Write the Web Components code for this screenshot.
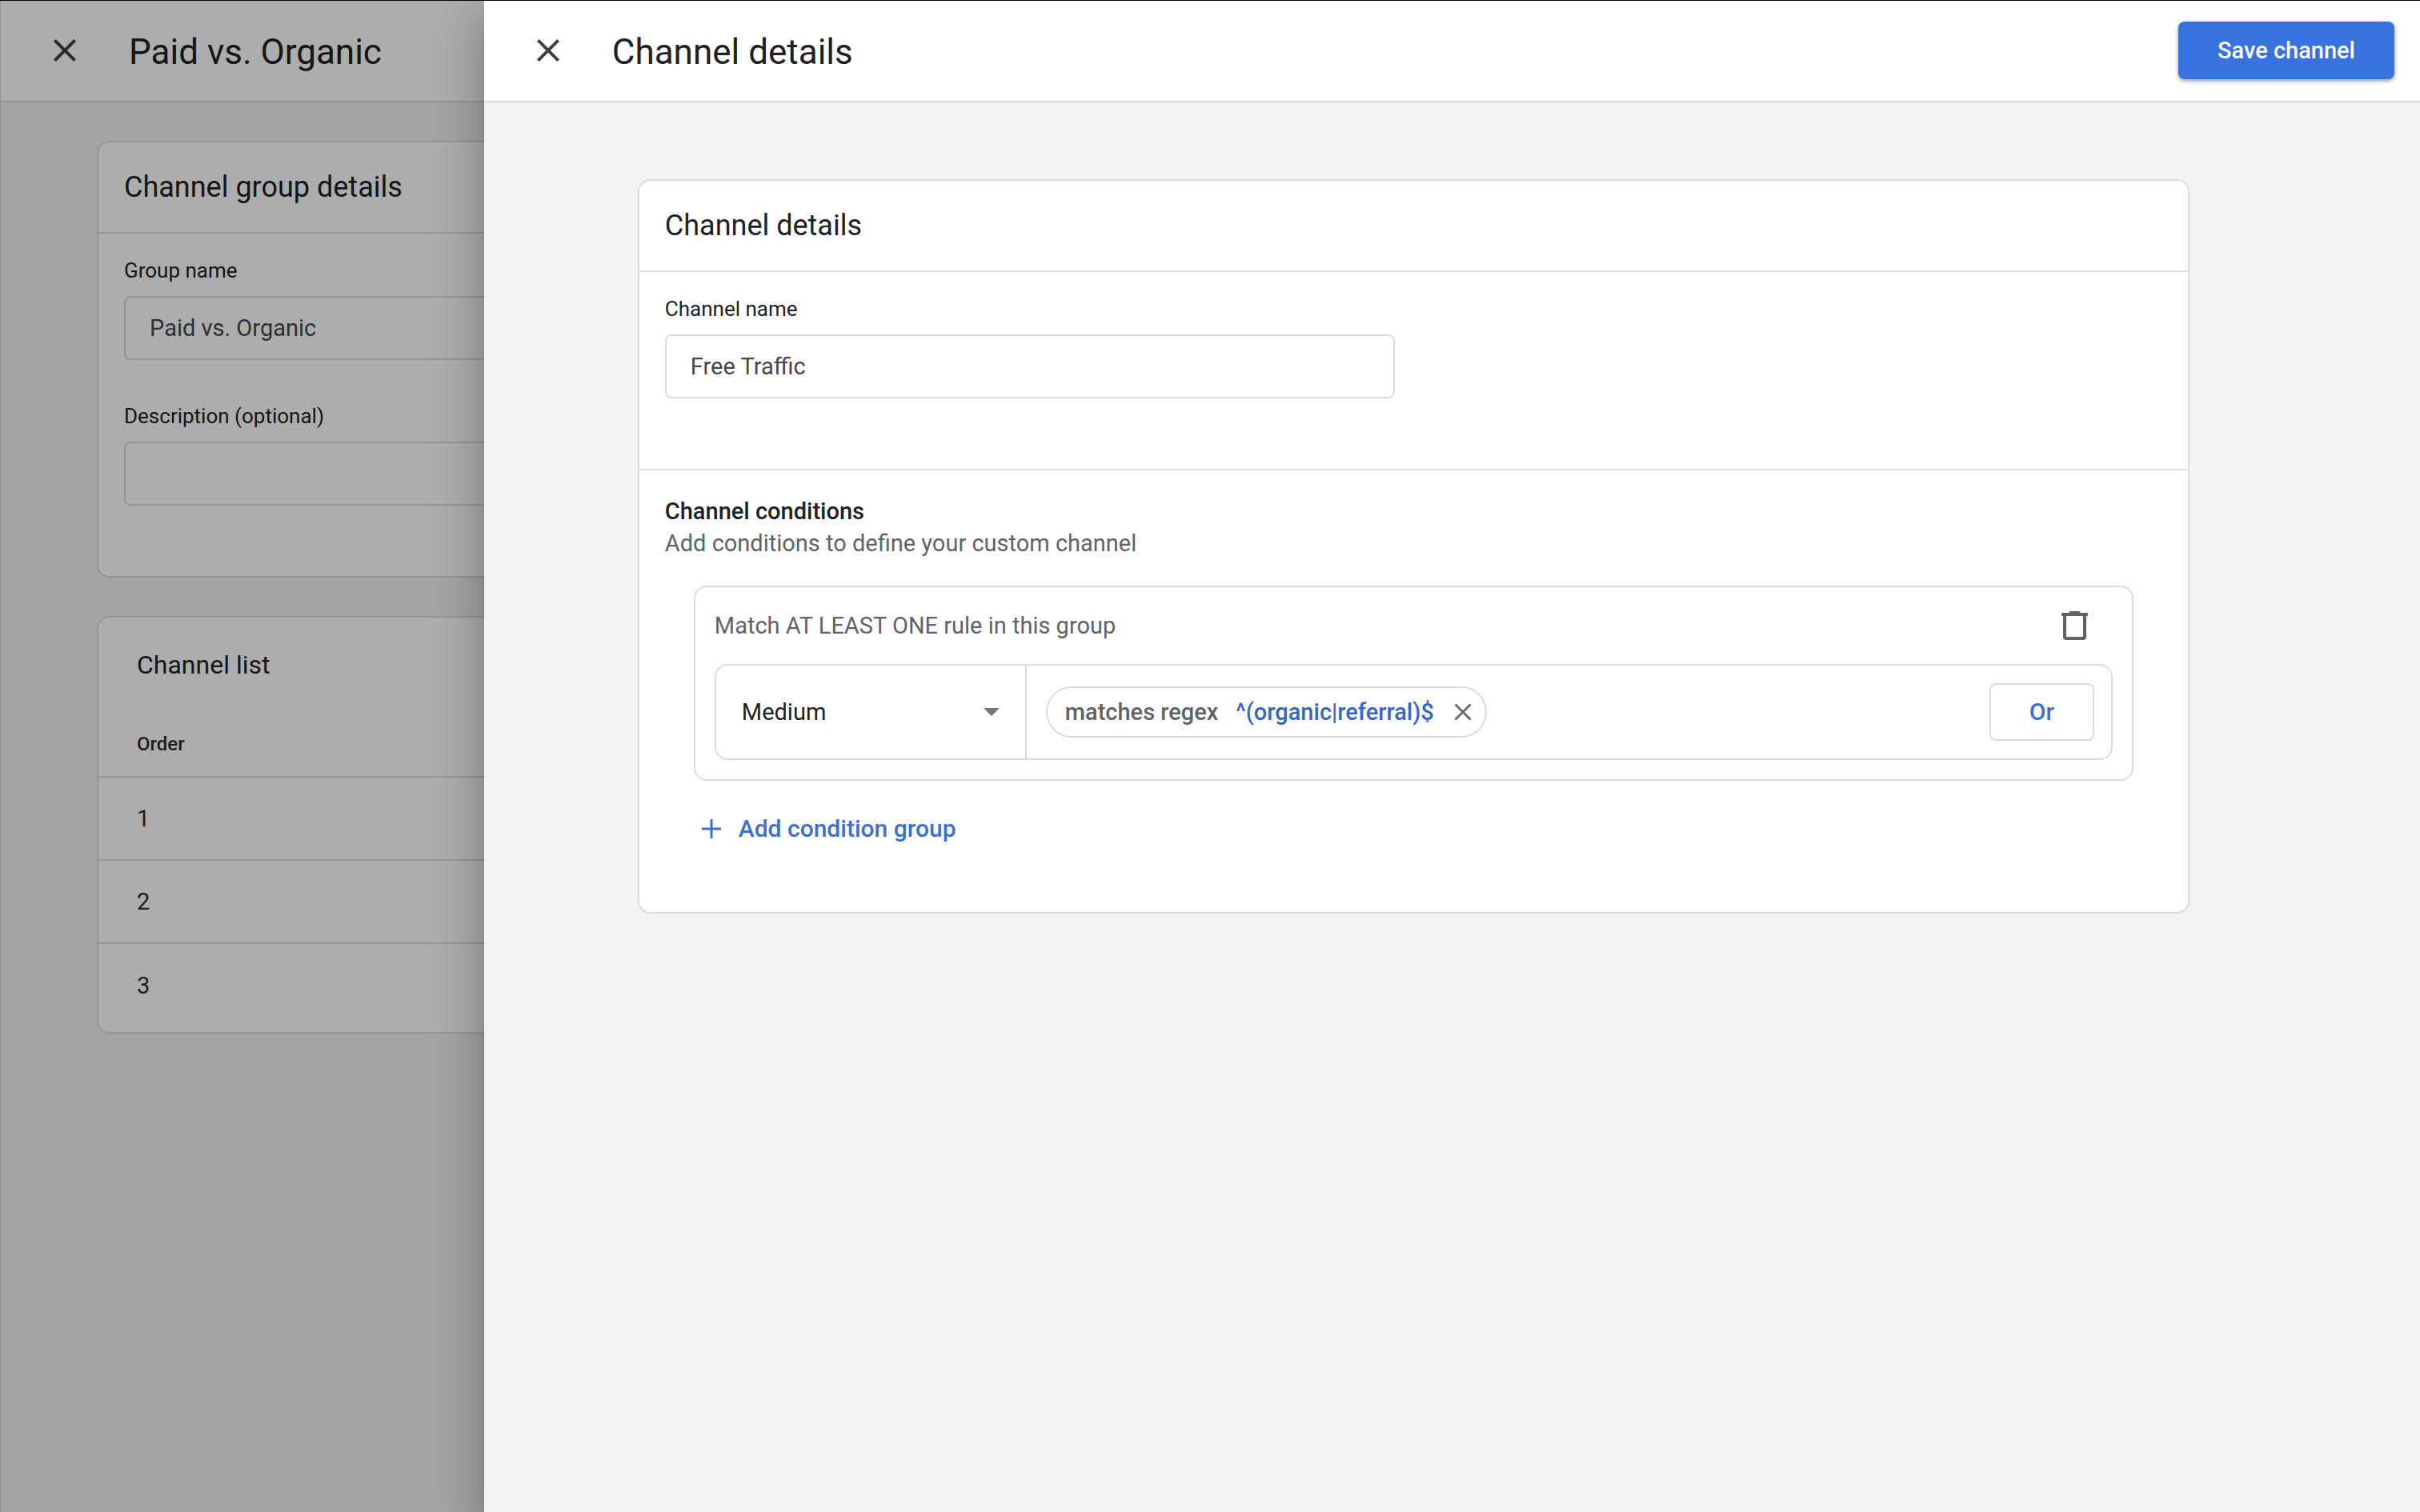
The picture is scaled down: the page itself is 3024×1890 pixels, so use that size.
<!DOCTYPE html>
<html lang="en">
<head>
<meta charset="utf-8">
<title>Channel details</title>
<style>
  :root {
    --ink: #202124;
    --ink-input: #46474a;
    --ink-muted: #5f6368;
    --line: #dadce0;
    --surface: #fff;
    --canvas: #f1f3f4;
    --blue: #3871e0;
    --blue-text: #3b6fd4;
    --blue-dark: #3367c6;
  }
  html, body { height: 100%; }
  body {
    margin: 0;
    box-sizing: border-box;
    border-top: 1px solid #000;
    overflow: hidden;
    font-family: Roboto, "Liberation Sans", sans-serif;
    font-size: 29px;
    line-height: 40px;
    color: var(--ink);
  }
</style>
</head>
<body>
<app-shell>
  <page-view class="edge">
    <page-header slot="header" heading="Paid vs. Organic"></page-header>
    <section-card heading="Channel group details">
      <form-body>
        <text-field label="Group name" value="Paid vs. Organic"></text-field>
        <text-field label="Description (optional)" value=""></text-field>
      </form-body>
    </section-card>
    <channel-list heading="Channel list" rows="3"></channel-list>
  </page-view>
  <page-view slot="drawer" class="inset">
    <page-header slot="header" heading="Channel details">
      <primary-button>Save channel</primary-button>
    </page-header>
    <section-card heading="Channel details">
      <form-body>
        <text-field label="Channel name" value="Free Traffic"></text-field>
      </form-body>
      <conditions-editor></conditions-editor>
    </section-card>
  </page-view>
</app-shell>

<script>
const define = (name, html, setup) => {
  const template = document.createElement('template');
  template.innerHTML = '<style>*{box-sizing:border-box}h1,h2,h3,p{margin:0;font-size:inherit;font-weight:400}button,input,select{font:inherit;margin:0}button{border:0;padding:0;background:none;cursor:pointer}svg{display:block;flex:none}</style>' + html;
  customElements.define(name, class extends HTMLElement {
    constructor() {
      super();
      this.attachShadow({ mode: 'open' }).append(template.content.cloneNode(true));
    }
    connectedCallback() {
      if (setup && !this.ready) { this.ready = true; setup(this, this.shadowRoot); }
    }
  });
};

define('app-shell', `
  <style>
    :host { display: block; position: relative; height: 100%; overflow: hidden; background: var(--canvas); }
    .scrim { position: absolute; inset: 0; background: rgba(0,0,0,.32); }
    .drawer {
      position: absolute; top: 0; right: 0; bottom: 0; width: 80%;
      background: var(--canvas);
      box-shadow: 0 16px 20px -10px rgba(0,0,0,.2), 0 32px 48px 4px rgba(0,0,0,.14), 0 12px 60px 10px rgba(0,0,0,.12);
    }
  </style>
  <slot></slot>
  <div class="scrim"></div>
  <aside class="drawer"><slot name="drawer"></slot></aside>`);

define('page-view', `
  <style>
    :host { display: block; height: 100%; }
    :host(.edge) { border-left: 1px solid var(--line); }
    main { display: flex; flex-direction: column; gap: 48px; padding: 48px 120px; }
    :host(.inset) main { padding: 96px 288px 96px 192px; }
  </style>
  <slot name="header"></slot>
  <main><slot></slot></main>`);

define('page-header', `
  <style>
    :host { display: block; }
    header {
      display: flex; align-items: center; height: 127px; padding: 0 32px 2px 56px;
      background: var(--surface); border-bottom: 2px solid var(--line);
    }
    h1 { flex: 1; margin-left: 56px; padding-top: 4px; font-size: 44px; line-height: 56px; }
  </style>
  <header>
    <button type="button" aria-label="Close">
      <svg width="48" height="48" viewBox="0 0 24 24" fill="#3c4043"><path d="M19 6.41 17.59 5 12 10.59 6.41 5 5 6.41 10.59 12 5 17.59 6.41 19 12 13.41 17.59 19 19 17.59 13.41 12z"/></svg>
    </button>
    <h1></h1>
    <slot></slot>
  </header>`, (host, root) => {
  root.querySelector('h1').textContent = host.getAttribute('heading');
});

define('primary-button', `
  <style>
    :host { display: block; }
    button {
      display: block; height: 72px; min-width: 270px; padding: 0 32px; border-radius: 8px;
      background: var(--blue); color: #fff; font-weight: 500;
      box-shadow: 0 2px 4px rgba(60,64,67,.4), 0 2px 6px 1px rgba(60,64,67,.15);
    }
  </style>
  <button type="button"><slot></slot></button>`);

define('section-card', `
  <style>
    :host { display: block; background: var(--surface); border: 2px solid var(--line); border-radius: 16px; overflow: hidden; }
    h2 { display: flex; align-items: center; height: 112px; padding: 0 32px; font-size: 36px; line-height: 48px; }
  </style>
  <h2></h2>
  <slot></slot>`, (host, root) => {
  root.querySelector('h2').textContent = host.getAttribute('heading');
});

define('form-body', `
  <style>
    :host { display: flex; flex-direction: column; gap: 54px; padding: 30px 32px 88px; border-top: 2px solid #e0e0e0; }
  </style>
  <slot></slot>`);

define('text-field', `
  <style>
    :host { display: flex; flex-direction: column; gap: 16px; max-width: 912px; }
    label { font-size: 26px; line-height: 32px; }
    input {
      width: 100%; height: 80px; padding: 0 30px; border: 2px solid var(--line); border-radius: 8px;
      background: var(--surface); color: var(--ink-input); outline: none;
    }
  </style>
  <label for="field"></label>
  <input id="field" type="text">`, (host, root) => {
  root.querySelector('label').textContent = host.getAttribute('label');
  root.querySelector('input').value = host.getAttribute('value');
});

define('channel-list', `
  <style>
    :host { display: block; padding-bottom: 6px; background: var(--surface); border: 2px solid var(--line); border-radius: 16px; overflow: hidden; }
    h2 { display: flex; align-items: center; height: 118px; padding: 0 48px; font-size: 32px; }
    table { width: 100%; border-collapse: separate; border-spacing: 0; }
    th, td { padding: 0 48px; text-align: left; border-bottom: 2px solid var(--line); color: #2b2c2f; }
    th { height: 82px; font-size: 24px; font-weight: 500; }
    td { height: 104px; }
    tr:last-child td { border-bottom: 0; }
  </style>
  <h2></h2>
  <table>
    <thead><tr><th scope="col">Order</th></tr></thead>
    <tbody></tbody>
  </table>`, (host, root) => {
  root.querySelector('h2').textContent = host.getAttribute('heading');
  const body = root.querySelector('tbody');
  for (let i = 1; i <= Number(host.getAttribute('rows')); i++) {
    body.insertRow().insertCell().textContent = i;
  }
});

define('filter-chip', `
  <style>
    :host {
      display: flex; align-items: center; height: 64px; padding: 0 10px 0 22px;
      border: 2px solid var(--line); border-radius: 32px; font-weight: 500; white-space: nowrap;
    }
    .operator { margin-right: 22px; color: var(--ink-muted); }
    .value { margin-right: 18px; color: var(--blue-dark); }
  </style>
  <span class="operator"></span>
  <span class="value"></span>
  <button type="button" aria-label="Remove filter">
    <svg width="36" height="36" viewBox="0 0 36 36" fill="none" stroke="#6b6c6f" stroke-width="3"><path d="M8.500 8.500l19 19M27.500 8.500l-19 19"/></svg>
  </button>`, (host, root) => {
  root.querySelector('.operator').textContent = host.getAttribute('operator');
  root.querySelector('.value').textContent = host.getAttribute('value');
});

define('rule-row', `
  <style>
    :host {
      display: flex; align-items: center; height: 120px; padding-right: 21px;
      border: 2px solid var(--line); border-radius: 16px; overflow: hidden;
    }
    .dimension { display: grid; align-self: stretch; width: 388px; border-right: 2px solid var(--line); }
    .dimension > * { grid-area: 1 / 1; }
    select {
      appearance: none; border: 0; padding: 0 64px 0 32px; background: transparent;
      color: var(--ink); outline: none; cursor: pointer;
    }
    .arrow { align-self: center; justify-self: end; margin-right: 32px; pointer-events: none; }
    filter-chip { margin-left: 24px; }
    .or {
      width: 131px; height: 72px; margin-left: auto; border: 2px solid var(--line); border-radius: 8px;
      color: var(--blue-text); font-size: 30px; font-weight: 500;
    }
  </style>
  <div class="dimension">
    <select aria-label="Dimension"><option>Medium</option></select>
    <svg class="arrow" width="20" height="10" viewBox="0 0 20 10" fill="#757575"><path d="M0 0h20L10 10z"/></svg>
  </div>
  <filter-chip operator="matches regex" value="^(organic|referral)$"></filter-chip>
  <button class="or" type="button">Or</button>`);

define('condition-group', `
  <style>
    :host { display: block; padding: 0 24px 24px; border: 2px solid var(--line); border-radius: 16px; }
    header { display: flex; align-items: center; justify-content: space-between; height: 96px; padding-right: 24px; }
    p { color: var(--ink-muted); }
  </style>
  <header>
    <p>Match AT LEAST ONE rule in this group</p>
    <button type="button" aria-label="Delete group">
      <svg width="48" height="48" viewBox="0 0 48 48"><path fill="#5f6368" d="M18 6h13v2h10v4H8V8h10z"/><path fill="none" stroke="#5f6368" stroke-width="4" d="M12 11v27q0 2 2 2h21q2 0 2-2V11"/></svg>
    </button>
  </header>
  <rule-row></rule-row>`);

define('conditions-editor', `
  <style>
    :host { display: block; padding: 31px 32px 68px; border-top: 2px solid #e0e0e0; }
    h3 { font-weight: 500; }
    p { color: var(--ink-muted); }
    .groups { display: flex; flex-direction: column; align-items: stretch; gap: 24px; margin: 33px 36px 0; }
    .add {
      display: flex; align-items: center; gap: 12px; align-self: flex-start; height: 72px;
      color: var(--blue-text); font-size: 30px; font-weight: 500;
    }
  </style>
  <h3>Channel conditions</h3>
  <p>Add conditions to define your custom channel</p>
  <div class="groups">
    <condition-group></condition-group>
    <button class="add" type="button">
      <svg width="44" height="44" viewBox="0 0 44 44" stroke="#3b6fd4" stroke-width="3"><path d="M22 10v24M10 22h24"/></svg>
      Add condition group
    </button>
  </div>`);
</script>
</body>
</html>
